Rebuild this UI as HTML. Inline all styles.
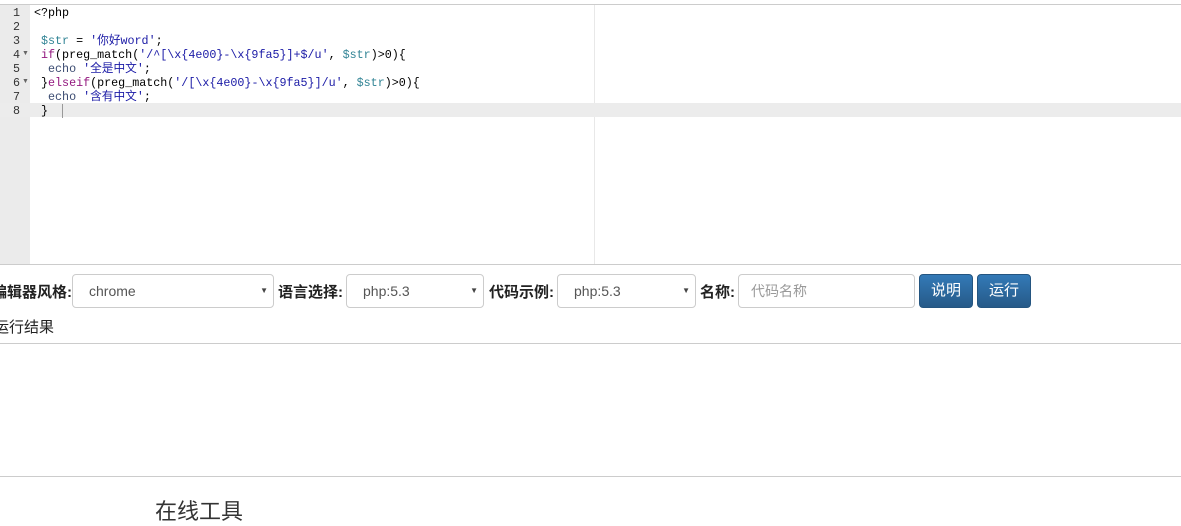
<!DOCTYPE html>
<html><head><meta charset="utf-8"><style>
body{margin:0;width:1181px;height:511px;overflow:hidden;background:#fff;font-family:"Liberation Sans","Noto Sans CJK SC",sans-serif;position:relative}
.ed{position:absolute;left:0;top:4px;width:1181px;height:259px;border-top:1px solid #ccc;border-bottom:1px solid #ccc;}
.gut{position:absolute;left:0;top:0;width:30px;height:259px;background:#ebebeb}
.pm{position:absolute;left:594px;top:0;width:1px;height:259px;background:#e8e8e8}
.hl{position:absolute;left:0;top:98px;width:1181px;height:14px;background:#ececec}
.ln{position:absolute;left:0;width:20px;text-align:right;font:11.7px/14px "Liberation Mono",monospace;color:#333}
.cd{position:absolute;left:34px;font:11.7px/14px "Liberation Mono","Noto Sans CJK SC",monospace;color:#000;white-space:pre}
.v{color:#318495}.k{color:#93187f}.s{color:#1a1aa6}.f{color:#3c4c72}
.fold{font-size:7px;color:#666;position:absolute;left:22px}
.lbl{position:absolute;top:281px;font-weight:bold;font-size:15px;color:#222}
.sel{position:absolute;top:274px;border:1px solid #ccc;border-radius:4px;box-sizing:border-box;height:34px;font-size:14px;color:#555;line-height:32px;padding-left:16px}
.sel.a:after{content:"▼";position:absolute;right:5px;font-size:8px;color:#444}
.btn{position:absolute;top:274px;height:34px;border-radius:4px;background:linear-gradient(#337ab7,#265a88);border:1px solid #245580;box-sizing:border-box;color:#fff;font-size:15px;line-height:32px;text-align:center}
</style></head><body>
<div class="ed"><div class="gut"></div><div class="pm"></div><div class="hl"></div>
<div class="ln" style="top:1px">1</div><div class="ln" style="top:15px">2</div><div class="ln" style="top:29px">3</div><div class="ln" style="top:43px">4</div><div class="ln" style="top:57px">5</div><div class="ln" style="top:71px">6</div><div class="ln" style="top:85px">7</div><div class="ln" style="top:99px">8</div>
<span class="fold" style="top:45px">▼</span><span class="fold" style="top:73px">▼</span>
<div class="cd" style="top:1px">&lt;?php</div>
<div class="cd" style="top:29px"> <span class="v">$str</span> = <span class="s">'你好word'</span>;</div>
<div class="cd" style="top:43px"> <span class="k">if</span>(preg_match(<span class="s">'/^[\x{4e00}-\x{9fa5}]+$/u'</span>, <span class="v">$str</span>)&gt;0){</div>
<div class="cd" style="top:57px">  <span class="f">echo</span> <span class="s">'全是中文'</span>;</div>
<div class="cd" style="top:71px"> }<span class="k">elseif</span>(preg_match(<span class="s">'/[\x{4e00}-\x{9fa5}]/u'</span>, <span class="v">$str</span>)&gt;0){</div>
<div class="cd" style="top:85px">  <span class="f">echo</span> <span class="s">'含有中文'</span>;</div>
<div class="cd" style="top:99px"> }  <span style="border-left:1px solid #999"> </span></div>
</div>
<div class="lbl" style="left:-8px">编辑器风格:</div>
<div class="sel a" style="left:72px;width:202px">chrome</div>
<div class="lbl" style="left:278px">语言选择:</div>
<div class="sel a" style="left:346px;width:138px">php:5.3</div>
<div class="lbl" style="left:489px">代码示例:</div>
<div class="sel a" style="left:557px;width:139px">php:5.3</div>
<div class="lbl" style="left:700px">名称:</div>
<div class="sel" style="left:738px;width:177px;color:#999;padding-left:12px">代码名称</div>
<div class="btn" style="left:919px;width:54px">说明</div>
<div class="btn" style="left:977px;width:54px">运行</div>
<div style="position:absolute;left:-6px;top:316px;font-size:15px;color:#222">运行结果</div>
<div style="position:absolute;left:0;top:343px;width:1181px;height:1px;background:#ccc"></div>
<div style="position:absolute;left:0;top:476px;width:1181px;height:1px;background:#ccc"></div>
<div style="position:absolute;left:155px;top:494px;font-size:22px;color:#333">在线工具</div>
</body></html>
